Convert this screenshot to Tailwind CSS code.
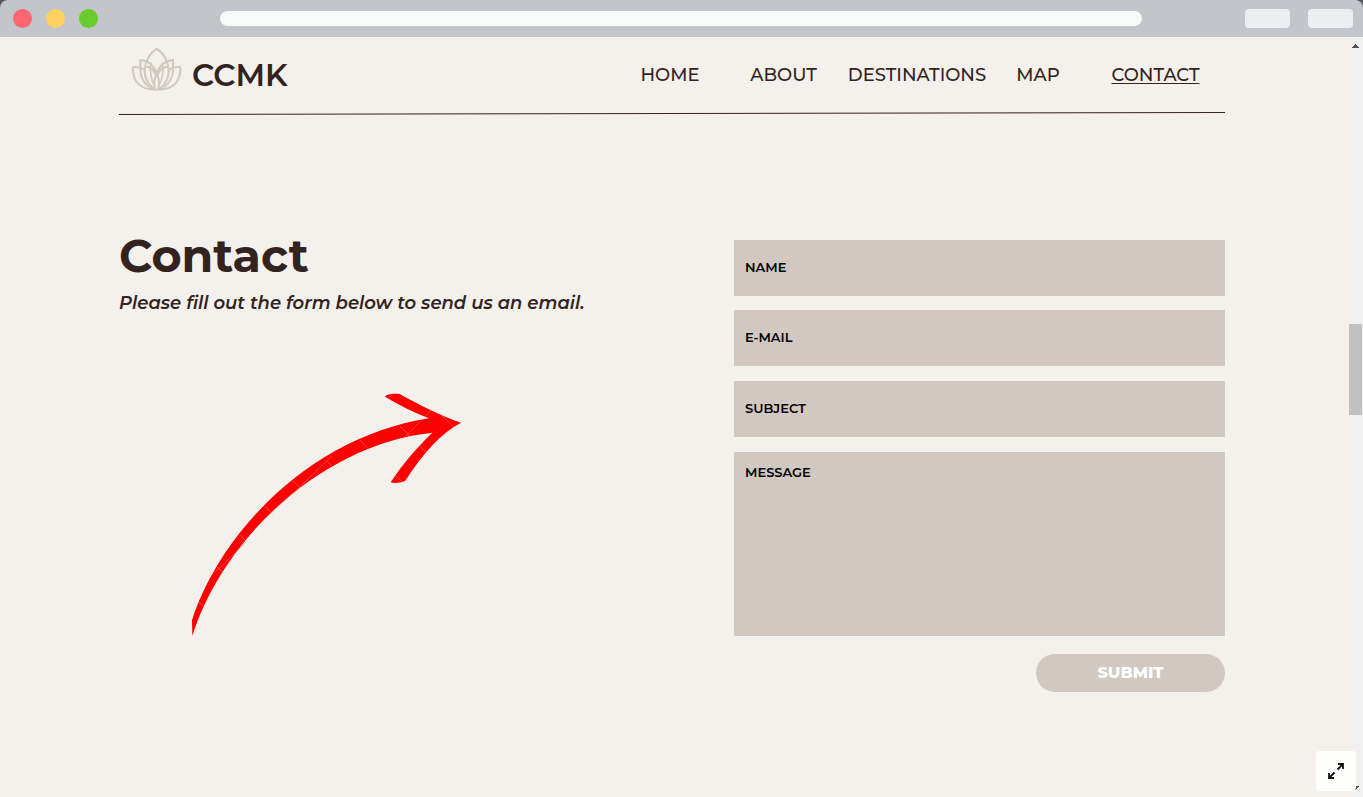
<!DOCTYPE html>
<html lang="en">
<head>
<meta charset="utf-8">
<meta name="viewport" content="width=device-width, initial-scale=1">
<title>CCMK – Contact</title>
<script src="https://cdn.jsdelivr.net/npm/@tailwindcss/browser@4"></script>
</head>
<body class="flex h-screen flex-col overflow-hidden bg-[#54575b] font-[Montserrat,Inter,sans-serif] text-[#32231f]">

<!-- Browser frame -->
<div class="flex h-[37px] shrink-0 items-center rounded-t-lg bg-[#c2c5c9] pr-[10px] pl-[13px]">
  <div class="flex gap-[14px]">
    <span class="size-[19px] rounded-full bg-[#ff6673]"></span>
    <span class="size-[19px] rounded-full bg-[#ffd160]"></span>
    <span class="size-[19px] rounded-full bg-[#6acb2c]"></span>
  </div>
  <div class="mr-[103px] ml-[122px] h-[15px] flex-1 rounded-full bg-[#f8faf9]"></div>
  <div class="flex gap-[18px]">
    <span class="h-[19px] w-[45px] rounded bg-[#ebeff2]"></span>
    <span class="h-[19px] w-[45px] rounded bg-[#ebeff2]"></span>
  </div>
</div>

<div class="relative flex min-h-0 flex-1 bg-[#f4f0eb]">
  <div class="min-w-0 flex-1 pr-[123px] pl-[119px]">
    <header>
      <div class="flex h-[75px] items-center justify-between">
        <a href="#" class="flex items-center gap-[10px] pl-3">
          <svg class="mb-3 h-[44px] w-[51px] text-[#d1c8c1]" viewBox="62 27 153 132" fill="none" stroke="currentColor" stroke-width="6" stroke-linejoin="miter" aria-hidden="true">
            <path d="M109 70C113 55 125 42 139 32C153 42 165 55 169 70"/>
            <path d="M90 88V66C112 68 131 82 139 108C147 82 166 68 188 66V88"/>
            <path d="M68 86C65 134 95 156 134 154C112 142 98 112 105 85C120 88 133 97 137 114M68 86C78 86 91 88 104 96M210 86C213 134 183 156 144 154C166 142 180 112 173 85C158 88 145 97 141 114M210 86C200 86 187 88 174 96"/>
            <path d="M90 88C88 120 106 147 134 154C130 134 131 120 139 108C147 120 148 134 144 154C172 147 190 120 188 88"/>
            <path d="M109 70C106 75 105 80 105 85M169 70C172 75 173 80 173 85M122 74C118 96 120 120 132 142M156 74C160 96 158 120 146 142" stroke-width="5"/>
          </svg>
          <span class="text-[31px] leading-9 font-semibold">CCMK</span>
        </a>
        <nav class="grid grid-cols-[106px_121px_146px_96px_139px] text-center text-[18px] leading-6 font-medium">
          <a href="#">HOME</a>
          <a href="#">ABOUT</a>
          <a href="#">DESTINATIONS</a>
          <a href="#">MAP</a>
          <a href="#" class="underline underline-offset-2" aria-current="page">CONTACT</a>
        </nav>
      </div>
      <svg class="block h-1 w-full" viewBox="0 0 1106 4" preserveAspectRatio="none" aria-hidden="true">
        <path d="M0 2.5L1106 .5" stroke="#32231f"/>
      </svg>
    </header>

    <main class="flex justify-between pt-[124px]">
      <section>
        <h1 class="-mt-2 text-[46px] leading-12 font-bold">Contact</h1>
        <p class="mt-[9px] text-[18px] leading-7 font-semibold italic">Please fill out the form below to send us an email.</p>
        <svg class="mt-[76px] ml-[73px] h-[243px] w-[269px]" viewBox="37 40 807 729" aria-hidden="true">
          <path fill="#f00" d="M37 722C125 450 400 170 748 116C700 98 655 74 616 51C620 44 640 40 660 43C720 76 790 112 844 129C785 160 730 220 677 303C665 309 645 312 633 308C665 258 710 205 758 159C430 193 130 475 38 769Z"/>
          <path fill="none" stroke="#f58a86" stroke-width="1.5" d="M57 667L75 683M105 578L130 556L200 486L181 465M112 562L131 578M257 380L279 404M300 376L360 323L340 303M360 323L457 228M440 243L465 267M541 181L572 214M660 138L696 174M668 180L725 122M737 110L757 90M782 103L822 142M718 196L738 218M648 287L667 307M626 55L638 43"/>
        </svg>
      </section>

      <form class="flex w-[491px] flex-col gap-[15px] text-[13px] font-semibold text-black">
        <div class="flex flex-col gap-[14px]">
          <input type="text" aria-label="Name" placeholder="NAME" class="h-14 bg-[#d1c8c1] px-[11px] pb-[2px] outline-none placeholder:text-black">
          <input type="email" aria-label="E-mail" placeholder="E-MAIL" class="h-14 bg-[#d1c8c1] px-[11px] pb-[2px] outline-none placeholder:text-black">
        </div>
        <input type="text" aria-label="Subject" placeholder="SUBJECT" class="h-14 bg-[#d1c8c1] px-[11px] pb-[2px] outline-none placeholder:text-black">
        <textarea aria-label="Message" placeholder="MESSAGE" class="h-[184px] resize-none bg-[#d1c8c1] px-[11px] py-[10px] leading-5 outline-none placeholder:text-black"></textarea>
        <button type="submit" class="mt-[3px] h-[38px] w-[189px] self-end rounded-full bg-[#d1c8c1] text-[16px] font-extrabold text-white">SUBMIT</button>
      </form>
    </main>
  </div>

  <!-- Scrollbar -->
  <div class="flex w-[15px] shrink-0 flex-col items-center justify-between bg-[#f0f0f0] py-[7px]" aria-hidden="true">
    <svg class="h-1 w-[7px]" viewBox="0 0 7 4" shape-rendering="crispEdges"><path fill="#505050" d="M0 4L3.5 0L7 4Z"/></svg>
    <div class="mb-24 h-[91px] w-[13px] bg-[#c1c1c1]"></div>
    <svg class="h-1 w-[7px]" viewBox="0 0 7 4" shape-rendering="crispEdges"><path fill="#505050" d="M0 0L3.5 4L7 0Z"/></svg>
  </div>

  <button type="button" aria-label="Full screen" class="absolute right-[7px] bottom-[6px] flex size-10 items-center justify-center rounded bg-[#fefefd]">
    <svg class="size-4" viewBox="0 0 16 16" fill="none" stroke="#0e1318" stroke-width="1.8" aria-hidden="true"><path d="M10 1H15V6M15 1L9.5 6.5M6 15H1V10M1 15L6.5 9.5"/></svg>
  </button>
</div>
</body>
</html>
